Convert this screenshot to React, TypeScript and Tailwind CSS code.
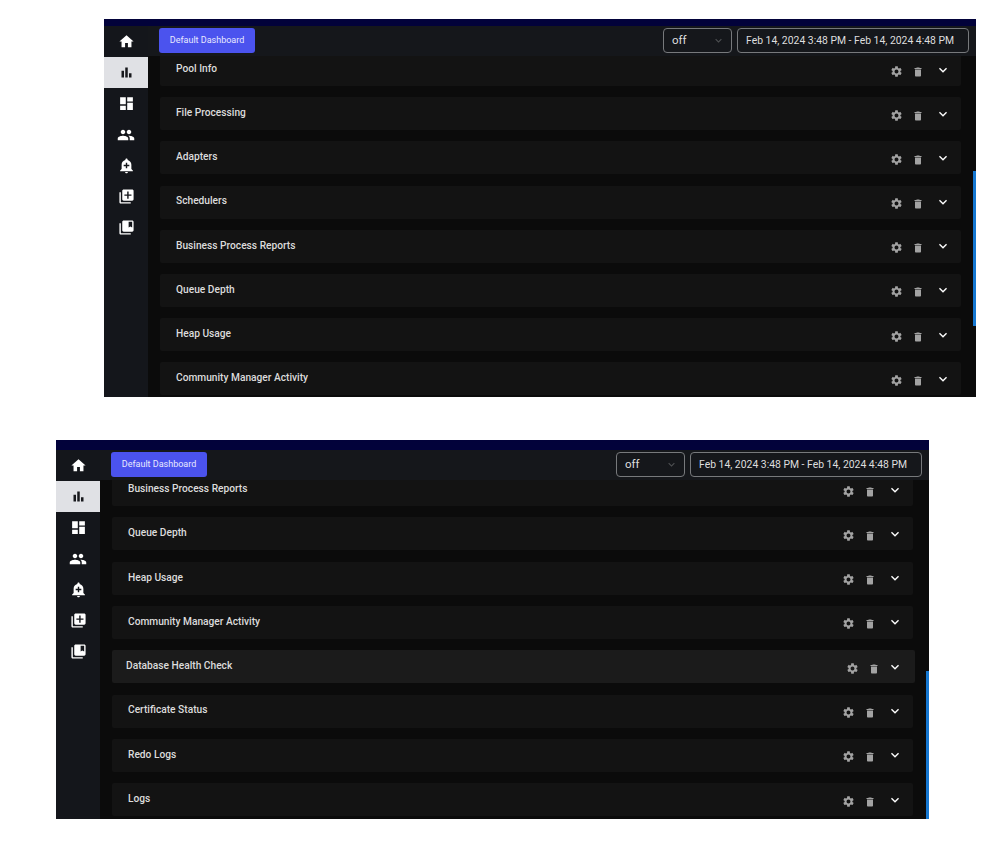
import {
  MdAddAlert,
  MdBarChart,
  MdCollectionsBookmark,
  MdDashboard,
  MdDelete,
  MdExpandMore,
  MdHome,
  MdLibraryAdd,
  MdPeople,
  MdSettings,
} from 'react-icons/md';

const navItems = [
  { icon: MdHome, size: 'text-[17px]' },
  { icon: MdBarChart, size: 'text-[15px]', active: true },
  { icon: MdDashboard, size: 'text-[17px]' },
  { icon: MdPeople, size: 'text-[18px]' },
  { icon: MdAddAlert, size: 'text-[17px]' },
  { icon: MdLibraryAdd, size: 'text-[17px]' },
  { icon: MdCollectionsBookmark, size: 'text-[17px]' },
];

type Row = { title: string; hovered?: boolean };

function WidgetRow({ title, hovered }: Row) {
  return (
    <div
      className={`flex h-[33px] shrink-0 items-center rounded-[2px] ${
        hovered ? 'w-[803px] bg-[#1b1b1b] pl-[14px]' : 'w-[801px] bg-[#131313] pl-[16px]'
      }`}
    >
      <span className="mb-[2px] text-[10.2px] font-medium text-[#dcdcdc]">{title}</span>
      <div className={`ml-auto flex items-center ${hovered ? 'pr-[12px]' : 'pr-[10px]'}`}>
        <MdSettings className="mr-[9px] mt-[3px] text-[13px] text-[#a3a3a3]" />
        <MdDelete className={`mt-[4px] text-[12px] text-[#a3a3a3] ${hovered ? 'mr-[7px]' : 'mr-[11px]'}`} />
        <MdExpandMore className="text-[16px] text-white" />
      </div>
    </div>
  );
}

function Panel({
  className,
  barClass,
  listClass,
  thumbClass,
  rows,
}: {
  className: string;
  barClass: string;
  listClass: string;
  thumbClass: string;
  rows: Row[];
}) {
  return (
    <div className={`relative flex flex-col overflow-hidden bg-[#0b0b0b] ${className}`}>
      <div className={`shrink-0 bg-[#02023a] ${barClass}`} />
      <div className="flex min-h-0 flex-1">
        <aside className="flex w-[44px] shrink-0 flex-col bg-[#14161b]">
          {navItems.map((item, i) => {
            const Icon = item.icon;
            return (
              <div
                key={i}
                className={`flex h-[31px] items-center justify-center ${
                  item.active ? 'bg-[#e0e1e5] text-[#17181c]' : 'text-white'
                }`}
              >
                <Icon className={item.size} />
              </div>
            );
          })}
        </aside>
        <main className="flex min-w-0 flex-1 flex-col">
          <header className="relative z-10 flex h-[30px] shrink-0 items-start bg-[#15171b] pl-[11px] pr-[7px] pt-[2px]">
            <button className="h-[25px] w-[96px] rounded-[3px] bg-[#4b53ee] text-[9px] text-[#e8e9ff]">
              Default Dashboard
            </button>
            <div className="ml-auto flex h-[25px] w-[69px] items-center justify-between rounded-[4px] border border-[#77797c] pl-[8px] pr-[6px] text-[11.5px] text-[#dedede]">
              off
              <MdExpandMore className="text-[13px] text-[#4e5053]" />
            </div>
            <div className="ml-[5px] flex h-[25px] w-[232px] items-center rounded-[4px] border border-[#77797c] pl-[8px] text-[10.4px] text-[#dedede]">
              Feb 14, 2024 3:48 PM - Feb 14, 2024 4:48 PM
            </div>
          </header>
          <div className={`flex flex-col pl-[12px] ${listClass}`}>
            {rows.map((row) => (
              <WidgetRow key={row.title} {...row} />
            ))}
          </div>
        </main>
      </div>
      <div className={`absolute right-0 w-[3px] bg-[#1678d2] ${thumbClass}`} />
    </div>
  );
}

export default function App() {
  return (
    <div className="h-[846px] overflow-hidden bg-white pt-[19px] font-['Roboto',sans-serif]">
      <Panel
        className="ml-[104px] h-[378px] w-[872px]"
        barClass="h-[7px]"
        listClass="-mt-[3px] gap-[11.2px]"
        thumbClass="top-[152px] h-[155px]"
        rows={[
          { title: 'Pool Info' },
          { title: 'File Processing' },
          { title: 'Adapters' },
          { title: 'Schedulers' },
          { title: 'Business Process Reports' },
          { title: 'Queue Depth' },
          { title: 'Heap Usage' },
          { title: 'Community Manager Activity' },
        ]}
      />
      <Panel
        className="ml-[56px] mt-[43px] h-[379px] w-[873px]"
        barClass="h-[10px]"
        listClass="-mt-[7px] gap-[11.33px]"
        thumbClass="top-[231px] bottom-0"
        rows={[
          { title: 'Business Process Reports' },
          { title: 'Queue Depth' },
          { title: 'Heap Usage' },
          { title: 'Community Manager Activity' },
          { title: 'Database Health Check', hovered: true },
          { title: 'Certificate Status' },
          { title: 'Redo Logs' },
          { title: 'Logs' },
        ]}
      />
    </div>
  );
}
